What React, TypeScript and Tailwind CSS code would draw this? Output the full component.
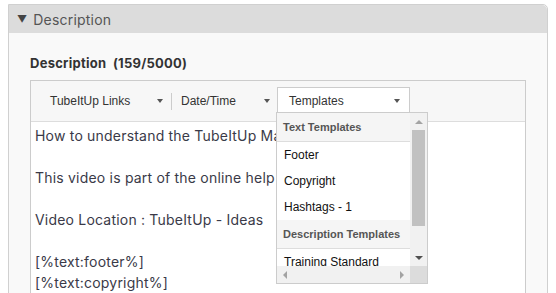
import React from "react";

const poppins = { fontFamily: "Inter, 'Noto Sans', sans-serif" };

function Caret() {
  return <span className="inline-block w-0 h-0 border-x-[3px] border-t-[4px] border-x-transparent border-t-[#555]" />;
}

export default function App() {
  const lines = [
    "How to understand the TubeItUp Management tool",
    "",
    "This video is part of the online help system",
    "",
    "Video Location : TubeItUp - Ideas",
    "",
    "[%text:footer%]",
    "[%text:copyright%]",
  ];

  return (
    <div className="relative w-[556px] h-[293px] overflow-hidden bg-white pt-[4px] pl-[8px]">
      {/* Panel */}
      <div className="w-[540px] h-[320px] border border-[#d0d0d0] rounded-tr-[5px] bg-[#f9f9f9]">
        <div
          className="h-[28px] bg-[#dcdcdc] flex items-center pl-[8px] text-[14px] tracking-[0.2px] text-[#555] rounded-tr-[5px]"
          style={poppins}
        >
          <span className="text-[10px] mr-[6px] text-[#444]">▼</span>
          <span>Description</span>
        </div>

        <div className="pl-[21px] pt-[20px]">
          <div className="text-[13px] leading-[20px] font-bold tracking-[0.25px] text-[#333] whitespace-pre" style={poppins}>
            Description  (159/5000)
          </div>

          {/* Editor */}
          <div className="mt-[7px] w-[496px] border border-[#ccc] bg-white">
            <div
              className="h-[41px] bg-[#f7f7f7] border-b border-[#ddd] flex items-center pl-[19px] text-[12px] text-[#333]"
              style={{ fontFamily: "'Liberation Sans', Arial, sans-serif" }}
            >
              <div className="w-[113px] flex items-center justify-between">
                <span>TubeItUp Links</span>
                <Caret />
              </div>
              <div className="ml-[8px] w-px h-[17px] bg-[#ccc]" />
              <div className="ml-[9px] w-[89px] flex items-center justify-between">
                <span>Date/Time</span>
                <Caret />
              </div>
              <div className="ml-[7px] w-[133px] h-[28px] border border-[#ccc] bg-white flex items-center justify-between pl-[11px] pr-[9px]">
                <span>Templates</span>
                <Caret />
              </div>
            </div>

            <div className="pl-[4px] pt-[3px] text-[14px] leading-[21px] tracking-[0.2px] text-[#3a3a48] whitespace-nowrap" style={poppins}>
              {lines.map((l, i) => (
                <div key={i} className="h-[21px]">{l}</div>
              ))}
            </div>
          </div>
        </div>
      </div>

      {/* Templates dropdown */}
      <div
        className="absolute left-[276px] top-[112px] w-[152px] h-[172px] border border-[#ccc] bg-white flex flex-col"
        style={{ fontFamily: "'Liberation Sans', Arial, sans-serif" }}
      >
        <div className="flex flex-1 min-h-0">
          <div className="flex-1 overflow-hidden">
            <div className="h-[29px] bg-[#f5f5f5] border-b border-[#ddd] flex items-center pl-[6px] text-[11px] font-bold text-[#555]">
              Text Templates
            </div>
            {["Footer", "Copyright", "Hashtags - 1"].map((t) => (
              <div key={t} className="h-[26px] flex items-center pl-[7px] text-[12px] text-[#111]">
                {t}
              </div>
            ))}
            <div className="h-[29px] bg-[#f5f5f5] border-b border-[#ddd] flex items-center pl-[6px] text-[11px] font-bold text-[#555] whitespace-nowrap">
              Description Templates
            </div>
            <div className="h-[26px] flex items-center pl-[7px] text-[12px] text-[#111] whitespace-nowrap">
              Training Standard
            </div>
          </div>
          {/* vertical scrollbar */}
          <div className="w-[17px] bg-[#f1f1f1] flex flex-col items-center">
            <div className="h-[17px] flex items-center justify-center">
              <span className="w-0 h-0 border-x-[4px] border-b-[4px] border-x-transparent border-b-[#a3a3a3]" />
            </div>
            <div className="w-[13px] h-[96px] bg-[#c1c1c1]" />
            <div className="flex-1" />
            <div className="h-[17px] flex items-center justify-center">
              <span className="w-0 h-0 border-x-[4px] border-t-[4px] border-x-transparent border-t-[#505050]" />
            </div>
          </div>
        </div>
        {/* horizontal scrollbar */}
        <div className="h-[17px] flex">
          <div className="flex-1 bg-[#f1f1f1] flex items-center justify-between px-[6px]">
            <span className="w-0 h-0 border-y-[4px] border-r-[4px] border-y-transparent border-r-[#a3a3a3]" />
            <span className="w-0 h-0 border-y-[4px] border-l-[4px] border-y-transparent border-l-[#a3a3a3]" />
          </div>
          <div className="w-[17px] bg-[#dcdcdc]" />
        </div>
      </div>
    </div>
  );
}
